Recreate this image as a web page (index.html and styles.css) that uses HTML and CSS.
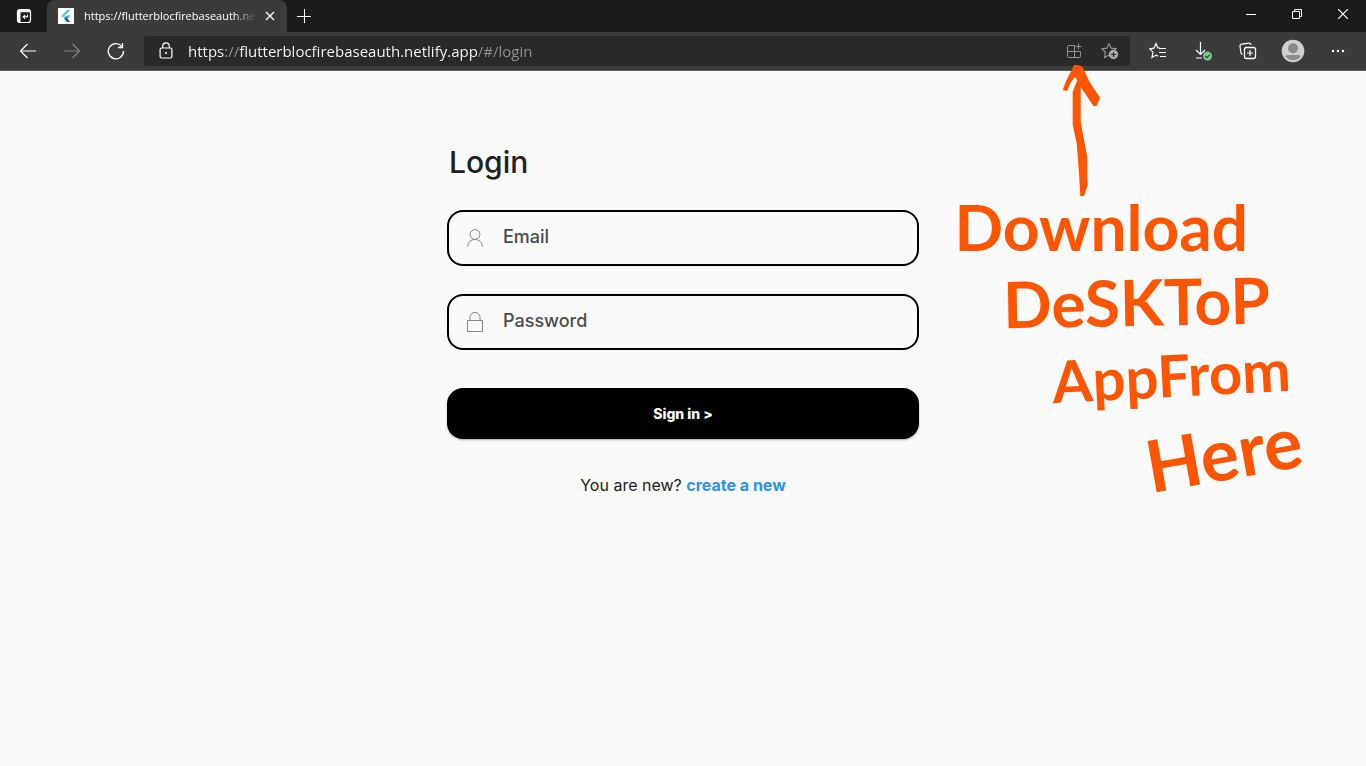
FILE: index.html
```html
<!DOCTYPE html>
<html lang="en">
<head>
<meta charset="utf-8">
<meta name="viewport" content="width=device-width, initial-scale=1">
<title>Login</title>
<link rel="stylesheet" href="styles.css">
</head>
<body>
<div class="window">
  <header class="titlebar">
    <button class="tab-actions" type="button" aria-label="Tab actions">
      <svg width="16" height="16" viewBox="0 0 16 16"><rect x="1.500" y="1.500" width="13" height="13" rx="2.500" fill="none" stroke="#fff" stroke-width="1.200"/><path d="M1.500 4.500V3.500a2 2 0 0 1 2-2h9a2 2 0 0 1 2 2v.7H4.500v10.300h-1a2 2 0 0 1-2-2z" fill="#fff"/><path d="M11.500 6.500v2.200H7.200M9.200 6.800 7.200 8.700l2 1.900" fill="none" stroke="#fff" stroke-width="1.100"/></svg>
    </button>
    <div class="tab">
      <svg class="favicon" width="16" height="16" viewBox="0 0 16 16"><path d="M0 0h16v16H0z" fill="#fff"/><path d="M9.200 2h3.300L5 9.500 3.300 7.900z" fill="#54c5f8"/><path d="M9.200 7.500h3.300L9.600 10.400 8 12 5.700 9.700l1.200-1z" fill="#35a8e8"/><path d="M6.300 10.900 8 9.300l4.500 4.700H9.300z" fill="#01579b"/></svg>
      <span class="tab-title">https://flutterblocfirebaseauth.ne</span>
      <button class="tab-close" type="button" aria-label="Close tab"><svg width="10" height="10" viewBox="0 0 10 10"><path d="m1 1 8 8M9 1 1 9" stroke="#fff" stroke-width="1.300"/></svg></button>
    </div>
    <button class="new-tab" type="button" aria-label="New tab"><svg width="14" height="14" viewBox="0 0 14 14"><path d="M7.500 0v14M0 7.500h14" stroke="#fff"/></svg></button>
    <div class="window-controls">
      <button type="button" aria-label="Minimize"><svg width="10" height="10" viewBox="0 0 10 10"><path d="M0 5.500h10" stroke="#fff"/></svg></button>
      <button type="button" aria-label="Restore"><svg width="10" height="10" viewBox="0 0 10 10"><path d="M.5 2.500h7v7h-7zM2.500 2.500v-2h7v7h-2" fill="none" stroke="#fff"/></svg></button>
      <button type="button" aria-label="Close"><svg width="10" height="10" viewBox="0 0 10 10"><path d="m0 0 10 10M10 0 0 10" stroke="#fff" stroke-width="1.200"/></svg></button>
    </div>
  </header>

  <nav class="toolbar" aria-label="Browser toolbar">
    <div class="nav-buttons">
      <button type="button" aria-label="Back"><svg width="18" height="16" viewBox="0 0 18 16"><path d="M17 8H1.500M8.500 1l-7 7 7 7" fill="none" stroke="#fff" stroke-width="1.200"/></svg></button>
      <button type="button" aria-label="Forward" disabled><svg width="18" height="16" viewBox="0 0 18 16"><path d="M1 8h15.500M9.500 1l7 7-7 7" fill="none" stroke="#848484" stroke-width="1.200"/></svg></button>
      <button type="button" aria-label="Refresh"><svg width="18" height="18" viewBox="0 0 18 18"><path d="M16.500 9A7.600 7.600 0 1 1 14.600 4.200M15.500 1v4.500H11" fill="none" stroke="#fff" stroke-width="1.300"/></svg></button>
    </div>
    <div class="address-bar">
      <svg class="lock" width="14" height="18" viewBox="0 0 14 18"><path d="M3.700 6V4.200a3.300 3.300 0 0 1 6.600 0V6" fill="none" stroke="#fff" stroke-width="1.200"/><rect x="1.100" y="6" width="11.800" height="10" rx="1.500" fill="none" stroke="#fff" stroke-width="1.200"/><circle cx="7" cy="11" r="1.100" fill="#fff"/></svg>
      <input class="url" type="text" aria-label="Address" value="https://flutterblocfirebaseauth.netlify.app/#/login">
      <div class="address-actions">
        <button type="button" aria-label="Install app"><svg width="16" height="16" viewBox="0 0 16 16"><path d="M9 2.500H2.500a1 1 0 0 0-1 1v10a1 1 0 0 0 1 1h11a1 1 0 0 0 1-1v-5h-13M8.500 2.500v12M12.500 .5v6M9.500 3.500h6" fill="none" stroke="#929292"/></svg></button>
        <button type="button" aria-label="Add to favorites"><svg width="18" height="18" viewBox="0 0 18 18"><path d="m8 1.500 2.100 4.700 5 .6-3.700 3.500M8 13l-4.400 2.500.9-5.200L.8 6.800l5.100-.6L8 1.500" fill="none" stroke="#929292" stroke-width="1.200"/><circle cx="12.500" cy="12.500" r="4.700" fill="#aaa"/><path d="M12.500 10v5M10 12.500h5" stroke="#292929" stroke-width="1.200"/></svg></button>
      </div>
    </div>
    <div class="tools">
      <button type="button" aria-label="Favorites"><svg width="18" height="18" viewBox="0 0 18 18"><path d="M11 6H9L7 1.500 5 6.200l-4.400.6L4 10.200 3 15.500l4-2.400 2 1M10 6.500h7M10 10.500h7M11 14.500h6" fill="none" stroke="#fff" stroke-width="1.200"/></svg></button>
      <button type="button" aria-label="Downloads"><svg width="18" height="20" viewBox="0 0 18 20"><path d="M6.500 1v12M2 9l4.500 4.500L11 9M2 17h6" fill="none" stroke="#fff" stroke-width="1.200"/><circle cx="13.500" cy="15" r="4.500" fill="#79c98e"/><path d="m11.200 15 1.600 1.600 3-3" fill="none" stroke="#1c4a2b" stroke-width="1.100"/></svg></button>
      <button type="button" aria-label="Collections"><svg width="18" height="18" viewBox="0 0 18 18"><path d="M3.500 12.500A2.500 2.500 0 0 1 1.800 10L1 4.500A2 2 0 0 1 2.800 2.200L9.500 1.100A2 2 0 0 1 12 3" fill="none" stroke="#fff" stroke-width="1.200"/><rect x="5.500" y="5.500" width="11" height="11" rx="2" fill="none" stroke="#fff" stroke-width="1.300"/><path d="M11 8v6M8 11h6" stroke="#fff" stroke-width="1.200"/></svg></button>
      <button type="button" aria-label="Profile"><svg width="24" height="24" viewBox="0 0 24 24"><circle cx="12" cy="12" r="11.300" fill="#d2d0ce"/><circle cx="12" cy="9.300" r="5" fill="#8d8b89"/><path d="M4.500 17.500q0-1.500 2-1.500h11q2 0 2 1.500A10 10 0 0 1 12 21.300a10 10 0 0 1-7.500-3.800z" fill="#8d8b89"/></svg></button>
      <button type="button" aria-label="Settings and more"><svg width="14" height="4" viewBox="0 0 14 4"><circle cx="2" cy="2" r="1.200" fill="#fff"/><circle cx="7" cy="2" r="1.200" fill="#fff"/><circle cx="12" cy="2" r="1.200" fill="#fff"/></svg></button>
    </div>
  </nav>

  <main class="page">
    <form class="login">
      <h1 class="login-title">Login</h1>
      <label class="field">
        <svg width="16" height="18" viewBox="0 0 16 18"><circle cx="8" cy="5.500" r="4.900" fill="none" stroke="#858585"/><path d="M.7 17.500C1 13 4 10.500 8 10.500s7 2.500 7.300 7" fill="none" stroke="#858585"/></svg>
        <input type="email" placeholder="Email" aria-label="Email">
      </label>
      <label class="field">
        <svg width="16" height="20" viewBox="0 0 16 20"><path d="M.5 8.500h15v11H.5zM3 8.500V5.300a5 5 0 0 1 10 0v3.200" fill="none" stroke="#858585"/></svg>
        <input type="password" placeholder="Password" aria-label="Password">
      </label>
      <button class="sign-in" type="button">Sign in &gt;</button>
      <p class="signup">You are new? <a href="#">create a new</a></p>
    </form>

    <aside class="note">
      <svg class="note-arrow" width="40" height="132" viewBox="0 0 40 132"><path d="M.7 25 4 16 9.500 5.500 12-.2q4-1 8.700 2.500L28 17.700 38 32.700 34.700 41H31.500L18.700 22v34.700L22 75l3.300 16.700V112l.4 8L22 131h-3.700L17 108 14.700 78.300 10.700 60V26.700l4.600-11.500L13 12 9 17 5 26z" fill="#ff5500"/></svg>
      <span class="note-line note-download">Download</span>
      <span class="note-line note-desktop">DeSKToP</span>
      <span class="note-line note-app">AppFrom</span>
      <span class="note-line note-here">Here</span>
    </aside>
  </main>
</div>
</body>
</html>
```

FILE: styles.css
```css
* { box-sizing: border-box; }

body {
  margin: 0;
  background: #fafafa;
  font-family: "Open Sans", "Noto Sans", sans-serif;
}

button {
  display: flex;
  align-items: center;
  justify-content: center;
  padding: 0;
  border: 0;
  background: none;
  font: inherit;
}

.window {
  display: flex;
  flex-direction: column;
  min-height: 100vh;
}

.titlebar {
  display: flex;
  height: 32px;
  background: #1b1b1b;
}

.tab-actions { width: 47px; }

.tab {
  display: flex;
  align-items: center;
  width: 240px;
  padding: 0 10px 0 11px;
  border-radius: 8px 8px 0 0;
  background: #3b3b3b;
}

.favicon { flex: none; }

.tab-title {
  flex: 1;
  min-width: 0;
  margin-left: 10px;
  color: #fff;
  font-size: 11px;
  line-height: 16px;
  white-space: nowrap;
  mask-image: linear-gradient(to right, #000 calc(100% - 24px), transparent);
}

.tab-close {
  width: 14px;
  height: 14px;
  margin-left: 6px;
}

.new-tab { width: 34px; }

.window-controls {
  display: flex;
  height: 28px;
  margin-left: auto;
}

.window-controls button { width: 46px; }

.toolbar {
  display: flex;
  align-items: center;
  height: 39px;
  padding: 0 6px;
  border-bottom: 1px solid #5c5a5a;
  background: #3b3b3b;
}

.nav-buttons, .tools { display: flex; }

.nav-buttons button {
  width: 44px;
  height: 30px;
}

.address-bar {
  display: flex;
  flex: 1;
  align-items: center;
  height: 30px;
  margin: 0 5px 0 6px;
  padding: 0 2px 0 15px;
  border-radius: 3px;
  background: #292929;
}

.url {
  flex: 1;
  min-width: 0;
  margin: 0 16px 0 15px;
  padding: 0;
  border: 0;
  outline: 0;
  background: linear-gradient(to right, #fff 36px, #929292 36px, #929292 51px, #fff 51px, #fff 290px, #929292 290px);
  background-clip: text;
  color: transparent;
  font: 15px/20px "Open Sans", "Noto Sans", sans-serif;
}

.address-actions { display: flex; }

.address-actions button {
  width: 36px;
  height: 30px;
}

.tools button {
  width: 45px;
  height: 30px;
}

.page {
  position: relative;
  flex: 1;
  padding: 72px 16px;
  color: #212121;
  font-family: Inter, "Open Sans", sans-serif;
}

.login {
  display: flex;
  flex-direction: column;
  max-width: 472px;
  margin: 0 auto;
}

.login-title {
  margin: 0 0 29px 2px;
  font-size: 30px;
  font-weight: 500;
  line-height: 38px;
}

.field {
  display: flex;
  align-items: center;
  height: 56px;
  margin-bottom: 28px;
  padding: 0 18px;
  border: 2px solid #000;
  border-radius: 16px;
}

.field input {
  flex: 1;
  min-width: 0;
  margin-left: 20px;
  padding: 0 0 2px;
  border: 0;
  outline: 0;
  background: none;
  font: 500 18px/24px Inter, "Open Sans", sans-serif;
}

.field input::placeholder {
  color: #4b4b4b;
  opacity: 1;
}

.sign-in {
  height: 51px;
  margin-top: 10px;
  border-radius: 16px;
  background: #000;
  box-shadow: 0 1px 2px rgb(0 0 0 / 35%);
  color: #fff;
  font-size: 14px;
  font-weight: 800;
}

.signup {
  margin: 36px 0 0;
  font-size: 16px;
  line-height: 20px;
  text-align: center;
}

.signup a {
  color: #2f94e6;
  font-weight: 700;
  text-decoration: none;
}

/* Marker notes lying over the page */
.note {
  color: #ff5500;
  font-family: Lato, "Open Sans", sans-serif;
  font-weight: 700;
}

.note-arrow {
  position: absolute;
  top: -6px;
  right: 264px;
}

.note-line {
  position: absolute;
  line-height: 64px;
}

.note-download {
  top: 124px;
  right: 118px;
  font-size: 64px;
}

.note-desktop {
  top: 199px;
  right: 96px;
  font-size: 64px;
  transform: rotate(-1deg);
}

.note-app {
  top: 272px;
  right: 76px;
  font-size: 58px;
  transform: rotate(-3deg);
}

.note-here {
  top: 349px;
  right: 64px;
  font-size: 72px;
  transform: rotate(-10deg);
}
```
